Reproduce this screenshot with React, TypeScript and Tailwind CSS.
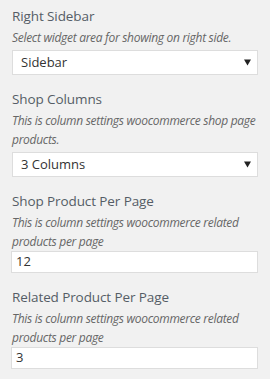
export default function App() {
  const fields = [
    { label: "Right Sidebar", desc: "Select widget area for showing on right side.", type: "select", value: "Sidebar" },
    { label: "Shop Columns", desc: "This is column settings woocommerce shop page products.", type: "select", value: "3 Columns" },
    { label: "Shop Product Per Page", desc: "This is column settings woocommerce related products per page", type: "input", value: "12" },
    { label: "Related Product Per Page", desc: "This is column settings woocommerce related products per page", type: "input", value: "3" },
  ];

  return (
    <div
      className="w-[270px] h-[379px] bg-[#f1f1f1] px-3 pt-[7px] flex flex-col gap-[15px]"
      style={{ fontFamily: '"Open Sans", "Noto Sans", sans-serif' }}
    >
      {fields.map((f) => (
        <div key={f.label} className="flex flex-col">
          <div className="text-[13.5px] leading-[18px] text-[#555d66] tracking-[-0.1px]">{f.label}</div>
          <div className="text-[12px] leading-[19px] italic text-[#666] mt-[3px] tracking-[-0.3px]">{f.desc}</div>
          {f.type == "select" ? (
            <div className="mt-[3px] h-[25px] bg-white border border-[#ddd] flex items-center justify-between pl-2 pr-[6px] text-[13px] text-[#333]">
              <span>{f.value}</span>
              <svg width="7" height="7" viewBox="0 0 7 7">
                <path d="M0 0.5H7L3.5 6.5Z" fill="#222" />
              </svg>
            </div>
          ) : (
            <div className="h-[22px] -ml-px bg-white border border-[#ddd] flex items-center px-[4px] text-[13px] text-[#333]">
              {f.value}
            </div>
          )}
        </div>
      ))}
    </div>
  );
}
